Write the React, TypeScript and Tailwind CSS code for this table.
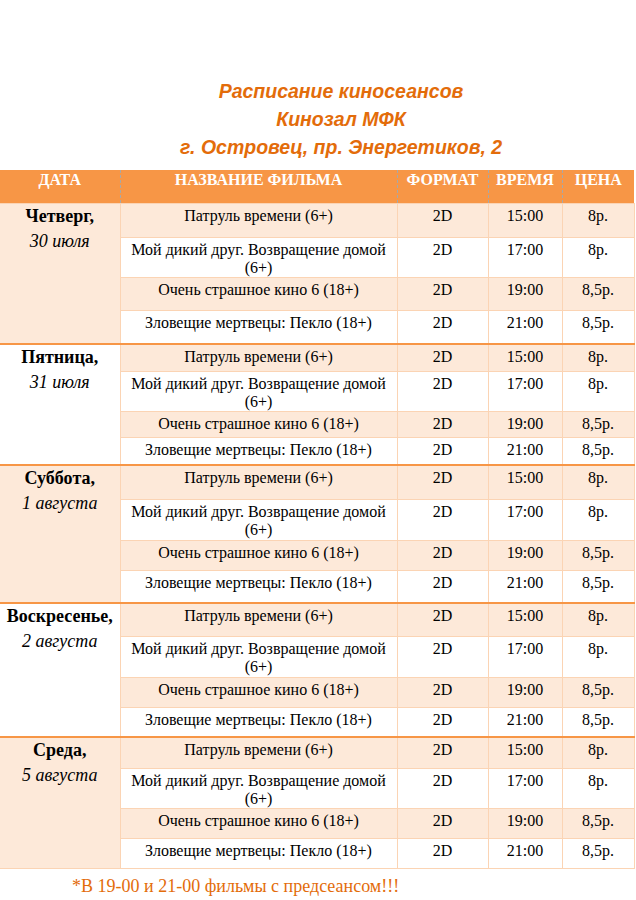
import React from 'react'

const sessions = [
   { title: 'Патруль времени (6+)', format: '2D', time: '15:00', price: '8р.' },
   { title: 'Мой дикий друг. Возвращение домой (6+)', format: '2D', time: '17:00', price: '8р.' },
   { title: 'Очень страшное кино 6 (18+)', format: '2D', time: '19:00', price: '8,5р.' },
   { title: 'Зловещие мертвецы: Пекло (18+)', format: '2D', time: '21:00', price: '8,5р.' }
]

const days = [
   { day: 'Четверг,', date: '30 июля', rows: ['h-[34px]', 'h-[40px]', 'h-[33px]', 'h-[34px]'] },
   { day: 'Пятница,', date: '31 июля', rows: ['h-[27px]', 'h-[40px]', 'h-[26px]', 'h-[28px]'] },
   { day: 'Суббота,', date: '1 августа', rows: ['h-[34px]', 'h-[41px]', 'h-[30px]', 'h-[33px]'] },
   { day: 'Воскресенье,', date: '2 августа', rows: ['h-[33px]', 'h-[41px]', 'h-[30px]', 'h-[30px]'] },
   { day: 'Среда,', date: '5 августа', rows: ['h-[31px]', 'h-[40px]', 'h-[30px]', 'h-[30px]'] }
]

const cell = 'border border-[#fbd4b4] align-top text-center px-[6px] pt-[3px] pb-0'

const App: React.FC = () => {
   return (
      <div className="w-[636px] min-h-[900px] bg-white font-['Liberation_Serif',serif] text-black">
         <div className="flex flex-col items-center pt-[77px] pl-[46px] font-['Liberation_Sans',sans-serif] font-bold italic text-[19.5px] leading-[28px] text-[#e36c0a]">
            <p>Расписание киносеансов</p>
            <p>Кинозал МФК</p>
            <p>г. Островец, пр. Энергетиков, 2</p>
         </div>

         <table className="mt-[9px] w-[634px] table-fixed border-collapse text-[16px] leading-[18px]">
            <colgroup>
               <col className="w-[120px]" />
               <col className="w-[277px]" />
               <col className="w-[91px]" />
               <col className="w-[74px]" />
               <col className="w-[72px]" />
            </colgroup>
            <thead>
               <tr className="h-[33px] bg-[#f79646] text-white">
                  <th className="align-top pt-[1px] font-bold border-r border-dashed border-[#a8a8a8]">ДАТА</th>
                  <th className="align-top pt-[1px] font-bold border-r border-dashed border-[#a8a8a8]">НАЗВАНИЕ ФИЛЬМА</th>
                  <th className="align-top pt-[1px] font-bold border-r border-dashed border-[#a8a8a8]">ФОРМАТ</th>
                  <th className="align-top pt-[1px] font-bold border-r border-dashed border-[#a8a8a8]">ВРЕМЯ</th>
                  <th className="align-top pt-[1px] font-bold">ЦЕНА</th>
               </tr>
            </thead>
            <tbody>
               {days.map((d, di) =>
                  sessions.map((s, si) => {
                     const first = si === 0 && di > 0
                     const top = first ? 'border-t-2 border-t-[#f79646]' : ''
                     const pad = si === 1 ? 'pt-[2px] leading-[18px]' : ''
                     const bg = si % 2 === 0 ? 'bg-[#fde9d9]' : 'bg-white'
                     return (
                        <tr key={`${di}-${si}`} className={`${d.rows[si]} ${bg}`}>
                           {si === 0 && (
                              <td
                                 rowSpan={4}
                                 className={`border border-[#fbd4b4] border-l-0 align-top text-center text-[18px] leading-[25px] ${top} ${di % 2 === 0 ? 'bg-[#fde9d9]' : 'bg-white'}`}
                              >
                                 <p className="font-bold">{d.day}</p>
                                 <p className="italic">{d.date}</p>
                              </td>
                           )}
                           <td className={`${cell} ${top} ${pad}`}>{s.title}</td>
                           <td className={`${cell} ${top} ${pad}`}>{s.format}</td>
                           <td className={`${cell} ${top} ${pad}`}>{s.time}</td>
                           <td className={`${cell} ${top} ${pad}`}>{s.price}</td>
                        </tr>
                     )
                  })
               )}
            </tbody>
         </table>

         <p className="mt-[7px] pl-[72px] text-[18px] leading-[20px] text-[#e36c0a]">*В 19-00 и 21-00 фильмы с предсеансом!!!</p>
      </div>
   )
}

export default App
